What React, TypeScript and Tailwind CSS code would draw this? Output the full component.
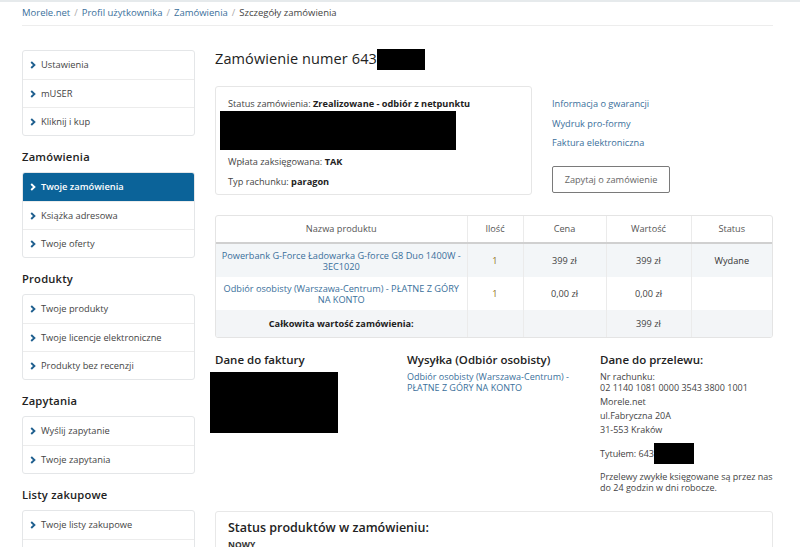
import React from 'react';

const Chevron = ({ white }: { white?: boolean }) => (
  <svg width="6" height="8" viewBox="0 0 6 8" className="shrink-0">
    <path d="M1.2 1 L4.4 4 L1.2 7" fill="none" stroke={white ? '#ffffff' : '#1f5f8f'} strokeWidth="1.9" />
  </svg>
);

type Item = { label: string; active?: boolean };

function SideGroup({ title, items }: { title?: string; items: Item[] }) {
  return (
    <div>
      {title && (
        <div className="mt-[13px] mb-[7px] h-[16px] flex items-center text-[11.2px] font-semibold text-[#222] tracking-[0.2px]">
          {title}
        </div>
      )}
      <div className="border border-[#e4e6e8] rounded-[3px] overflow-hidden bg-white">
        {items.map((it, i) => (
          <div
            key={it.label}
            className={
              'h-[28px] flex items-center gap-[5px] pl-[7px] text-[9.3px] ' +
              (i > 0 ? 'border-t border-[#ececec] ' : '') +
              (it.active ? 'bg-[#0b6399] text-white font-semibold' : 'text-[#444]')
            }
          >
            <Chevron white={it.active} />
            <span>{it.label}</span>
          </div>
        ))}
      </div>
    </div>
  );
}

const Redact = ({ className }: { className: string }) => <div className={'bg-black shrink-0 ' + className} />;

export default function App() {
  return (
    <div className="min-h-[547px] bg-white font-['Open_Sans',sans-serif] text-[#333] overflow-hidden">
      <div className="h-[2px] bg-[#e6eaec]" />
      <div className="pl-[22px] w-[773px]">
        {/* Breadcrumb */}
        <div className="h-[24px] flex items-center text-[9.5px] gap-[4px] border-b border-[#ededed]">
          <span className="text-[#3a6f9b]">Morele.net</span>
          <span className="text-[#aaa]">/</span>
          <span className="text-[#3a6f9b]">Profil użytkownika</span>
          <span className="text-[#aaa]">/</span>
          <span className="text-[#3a6f9b]">Zamówienia</span>
          <span className="text-[#aaa]">/</span>
          <span className="text-[#444]">Szczegóły zamówienia</span>
        </div>

        <div className="flex gap-[20px] mt-[23px]">
          {/* Sidebar */}
          <div className="w-[173px] shrink-0 pt-[1px]">
            <SideGroup items={[{ label: 'Ustawienia' }, { label: 'mUSER' }, { label: 'Kliknij i kup' }]} />
            <SideGroup
              title="Zamówienia"
              items={[{ label: 'Twoje zamówienia', active: true }, { label: 'Książka adresowa' }, { label: 'Twoje oferty' }]}
            />
            <SideGroup
              title="Produkty"
              items={[{ label: 'Twoje produkty' }, { label: 'Twoje licencje elektroniczne' }, { label: 'Produkty bez recenzji' }]}
            />
            <SideGroup title="Zapytania" items={[{ label: 'Wyślij zapytanie' }, { label: 'Twoje zapytania' }]} />
            <SideGroup title="Listy zakupowe" items={[{ label: 'Twoje listy zakupowe' }, { label: 'Udostępnione listy' }]} />
          </div>

          {/* Main */}
          <div className="flex-1 min-w-0">
            <div className="flex items-center h-[22px] mt-[-1px]">
              <h1 className="text-[14.5px] font-normal text-[#222] leading-[20px] tracking-[0.1px]">Zamówienie numer 643</h1>
              <Redact className="w-[48px] h-[21px]" />
            </div>

            <div className="flex gap-[20px] mt-[16px]">
              <div className="w-[317px] h-[109px] border border-[#e6e6e6] rounded-[3px] pl-[12px] pt-[11px] text-[9.2px] text-[#444] shrink-0">
                <div className="h-[12px] leading-[12px]">
                  Status zamówienia: <span className="font-bold text-[#222]">Zrealizowane - odbiór z netpunktu</span>
                </div>
                <Redact className="w-[236px] h-[39px] ml-[-8px] mt-[1px]" />
                <div className="h-[12px] leading-[12px] mt-[6px]">
                  Wpłata zaksięgowana: <span className="font-bold text-[#222]">TAK</span>
                </div>
                <div className="h-[12px] leading-[12px] mt-[8px]">
                  Typ rachunku: <span className="font-bold text-[#222]">paragon</span>
                </div>
              </div>
              <div className="pt-[12px] text-[9.2px] text-[#3a6f9b] flex flex-col items-start">
                <span className="h-[12px] leading-[12px]">Informacja o gwarancji</span>
                <span className="h-[12px] leading-[12px] mt-[7.5px]">Wydruk pro-formy</span>
                <span className="h-[12px] leading-[12px] mt-[7.5px]">Faktura elektroniczna</span>
                <button className="mt-[17px] w-[118px] h-[27px] border border-[#7a7a7a] rounded-[2px] text-[9.2px] text-[#666] bg-white">
                  Zapytaj o zamówienie
                </button>
              </div>
            </div>

            {/* Products table */}
            <div className="mt-[20px] border border-[#e4e4e4] rounded-[3px] overflow-hidden">
              <table className="w-full border-collapse text-[9.2px] text-[#444] text-center table-fixed">
                <thead>
                  <tr className="h-[27px] border-b-2 border-[#d0d0d0] text-[#555]">
                    <th className="font-normal w-[251px]">Nazwa produktu</th>
                    <th className="font-normal w-[56px] border-l border-[#ebebeb]">Ilość</th>
                    <th className="font-normal w-[83px] border-l border-[#ebebeb]">Cena</th>
                    <th className="font-normal w-[85px] border-l border-[#ebebeb]">Wartość</th>
                    <th className="font-normal border-l border-[#ebebeb]">Status</th>
                  </tr>
                </thead>
                <tbody>
                  <tr className="h-[34px] bg-[#f3f6f8] leading-[11px]">
                    <td className="text-[#3a6f9b] px-[3px]">Powerbank G-Force Ładowarka G-force G8 Duo 1400W - 3EC1020</td>
                    <td className="text-[#8f7323] border-l border-[#ebebeb]">1</td>
                    <td className="border-l border-[#ebebeb]">399 zł</td>
                    <td className="border-l border-[#ebebeb]">399 zł</td>
                    <td className="border-l border-[#ebebeb] text-[#333]">Wydane</td>
                  </tr>
                  <tr className="h-[33px] bg-white leading-[11px]">
                    <td className="text-[#3a6f9b] px-[3px]">Odbiór osobisty (Warszawa-Centrum) - PŁATNE Z GÓRY NA KONTO</td>
                    <td className="text-[#8f7323] border-l border-[#ebebeb]">1</td>
                    <td className="border-l border-[#ebebeb]">0,00 zł</td>
                    <td className="border-l border-[#ebebeb]">0,00 zł</td>
                    <td className="border-l border-[#ebebeb]"></td>
                  </tr>
                  <tr className="h-[27px] bg-[#f3f5f7]">
                    <td className="font-bold text-[#222]">Całkowita wartość zamówienia:</td>
                    <td className="border-l border-[#ebebeb]"></td>
                    <td className="border-l border-[#ebebeb]"></td>
                    <td className="border-l border-[#ebebeb]">399 zł</td>
                    <td className="border-l border-[#ebebeb]"></td>
                  </tr>
                </tbody>
              </table>
            </div>

            {/* Addresses */}
            <div className="flex mt-[14px]">
              <div className="w-[192px] shrink-0">
                <div className="h-[16px] leading-[16px] text-[11.5px] font-semibold text-[#222]">Dane do faktury</div>
                <Redact className="w-[128px] h-[61px] ml-[-5px] mt-[4px]" />
              </div>
              <div className="w-[193px] shrink-0">
                <div className="h-[16px] leading-[16px] text-[11.5px] font-semibold text-[#222]">Wysyłka (Odbiór osobisty)</div>
                <div className="mt-[3px] text-[9px] leading-[11px] text-[#3a6f9b] w-[170px]">
                  Odbiór osobisty (Warszawa-Centrum) - PŁATNE Z GÓRY NA KONTO
                </div>
              </div>
              <div className="flex-1 min-w-0 text-[9px] text-[#444]">
                <div className="h-[16px] leading-[16px] text-[11.5px] font-semibold text-[#222]">Dane do przelewu:</div>
                <div className="mt-[3px] leading-[11px]">
                  <div>Nr rachunku:</div>
                  <div>02 1140 1081 0000 3543 3800 1001</div>
                </div>
                <div className="mt-[3px] leading-[11px]">Morele.net</div>
                <div className="mt-[3px] leading-[11px]">ul.Fabryczna 20A</div>
                <div className="mt-[3px] leading-[11px]">31-553 Kraków</div>
                <div className="mt-[8px] flex items-center">
                  <span className="leading-[11px]">Tytułem: 643</span>
                  <Redact className="w-[40px] h-[21px]" />
                </div>
                <div className="mt-[7px] leading-[11px]">
                  Przelewy zwykłe księgowane są przez nas do 24 godzin w dni robocze.
                </div>
              </div>
            </div>

            {/* Status box */}
            <div className="mt-[18px] border border-[#e8e8e8] rounded-[3px] pl-[12px] pt-[8px] h-[60px]">
              <div className="text-[12.5px] font-semibold text-[#222] leading-[16px]">Status produktów w zamówieniu:</div>
              <div className="text-[8.5px] font-bold text-[#333] mt-[3px]">NOWY</div>
            </div>
          </div>
        </div>
      </div>
    </div>
  );
}
